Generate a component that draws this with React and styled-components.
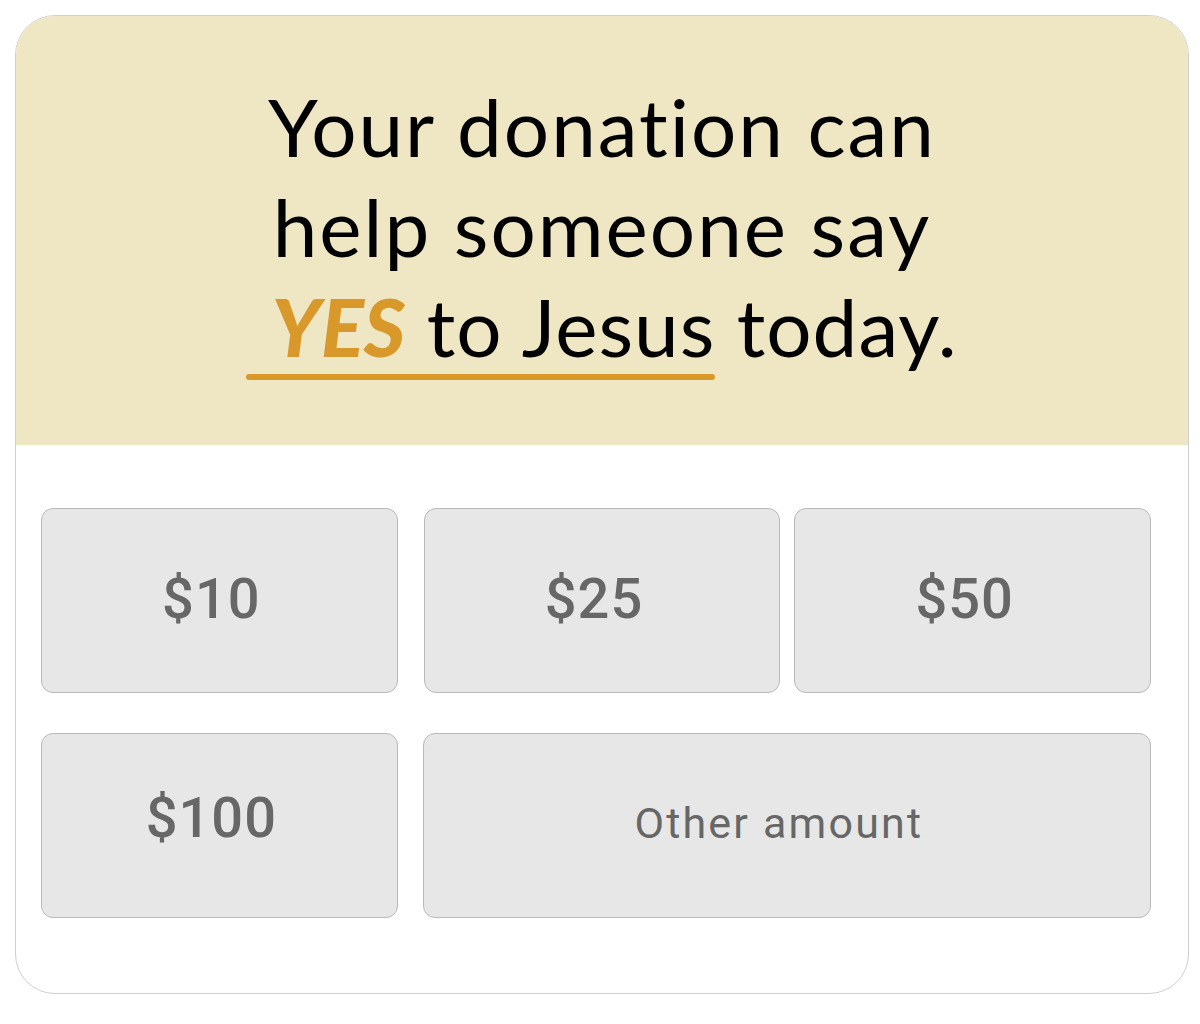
import React from 'react'
import styled, { createGlobalStyle } from 'styled-components'

const GlobalStyle = createGlobalStyle`
  body {
    margin: 0;
    background: #ffffff;
  }
`

const Card = styled.div`
  box-sizing: border-box;
  width: 1174px;
  height: 979px;
  margin: 15px 0 0 15px;
  border: 1px solid #cfcfcf;
  border-radius: 40px;
  overflow: hidden;
  background: #ffffff;
  display: flex;
  flex-direction: column;
`

const Banner = styled.div`
  background: #efe6c4;
  height: 429px;
  box-sizing: border-box;
  padding-top: 60px;
  text-align: center;
`

const Headline = styled.h1`
  margin: 0;
  font-family: Lato, "Noto Sans", sans-serif;
  font-weight: 400;
  font-size: 80px;
  line-height: 100px;
  letter-spacing: 2px;
  font-variant-ligatures: none;
  color: #000;
`

const LastLine = styled.span`
  letter-spacing: 1px;
`

const Underlined = styled.span`
  position: relative;
  padding-left: 25px;

  &::after {
    content: '';
    position: absolute;
    left: 0;
    right: 0;
    bottom: -6px;
    height: 6px;
    border-radius: 3px;
    background: #d9982a;
  }
`

const Yes = styled.span`
  font-weight: 900;
  font-style: italic;
  letter-spacing: 0;
  color: #d9982a;
`

const Amounts = styled.div`
  padding: 63px 37px 0 25px;
  display: flex;
  flex-direction: column;
  gap: 40px;
`

const Row = styled.div`
  display: flex;
`

const AmountButton = styled.button`
  box-sizing: border-box;
  width: ${p => p.$width}px;
  height: 185px;
  margin-left: ${p => p.$gap || 0}px;
  border: 1px solid #b9b9b9;
  border-radius: 12px;
  background: #e7e7e7;
  color: #676767;
  font-family: Roboto, "Noto Sans", sans-serif;
  font-weight: ${p => (p.$small ? 400 : 500)};
  font-size: ${p => (p.$small ? 43 : 56)}px;
  letter-spacing: ${p => (p.$small ? 2.2 : 1)}px;
  padding: 0 16px ${p => p.$lift || 0}px 0;
  display: flex;
  align-items: center;
  justify-content: center;
  cursor: pointer;
`

function App() {
  return (
    <>
      <GlobalStyle />
      <Card>
        <Banner>
          <Headline>
            Your donation can<br />
            help someone say<br />
            <LastLine>
              <Underlined><Yes>YES</Yes> to Jesus</Underlined> today.
            </LastLine>
          </Headline>
        </Banner>
        <Amounts>
          <Row>
            <AmountButton $width={357} $lift={4}>$10</AmountButton>
            <AmountButton $width={357} $gap={26} $lift={4}>$25</AmountButton>
            <AmountButton $width={357} $gap={14} $lift={4}>$50</AmountButton>
          </Row>
          <Row>
            <AmountButton $width={357} $lift={16}>$100</AmountButton>
            <AmountButton $width={729} $gap={25} $lift={6} $small>Other amount</AmountButton>
          </Row>
        </Amounts>
      </Card>
    </>
  )
}

export default App
